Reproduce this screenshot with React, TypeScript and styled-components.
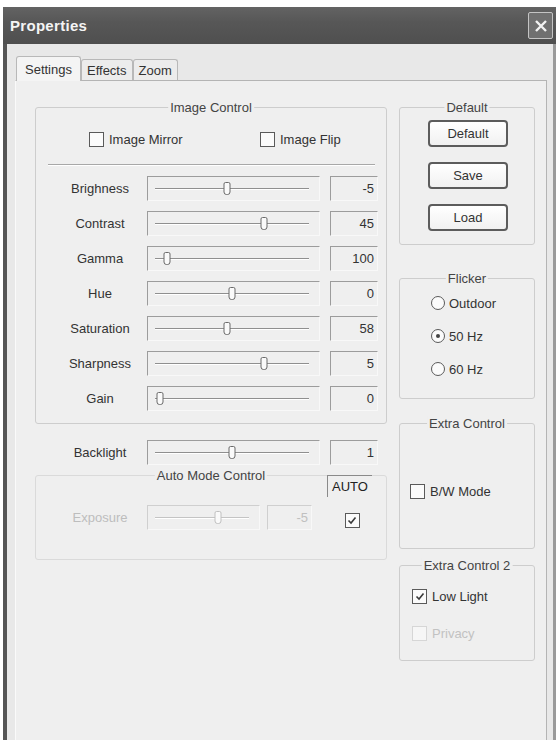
import React from 'react';
import styled, { createGlobalStyle } from 'styled-components';

const GlobalStyle = createGlobalStyle`
  html, body {
    margin: 0;
    background: #ffffff;
  }
  body {
    font-family: "Liberation Sans", Arial, sans-serif;
    font-size: 13px;
    color: #3a3a3a;
  }
`;

const Window = styled.div`
  margin: 7px 0 0 3px;
  width: 553px;
  height: 733px;
  overflow: hidden;
  display: flex;
  flex-direction: column;
`;

const TitleBar = styled.div`
  height: 37px;
  flex: none;
  display: flex;
  align-items: center;
  justify-content: space-between;
  padding: 0 3px 0 7px;
  background: linear-gradient(#636363, #575757 40%, #4f4f4f);
`;

const Title = styled.span`
  color: #f4f4f4;
  font-weight: bold;
  font-size: 15px;
  letter-spacing: 0.3px;
`;

const CloseButton = styled.div`
  width: 23px;
  height: 25px;
  border: 1px solid #c4c4c4;
  border-radius: 2px;
  background: #707070;
  display: flex;
  align-items: center;
  justify-content: center;
`;

const Frame = styled.div`
  flex: 1;
  display: flex;
  flex-direction: column;
  background: #e8e8e8;
  border-left: 4px solid #555555;
  border-right: 3px solid #9a9a9a;
  padding: 11px 6px 0 8px;
`;

const TabStrip = styled.div`
  display: flex;
  align-items: flex-end;
  height: 25px;
  padding-left: 1px;
`;

const Tab = styled.div<{ $active?: boolean }>`
  height: ${(p) => (p.$active ? 25 : 21)}px;
  box-sizing: border-box;
  padding: 0 ${(p) => (p.$active ? 8 : 5)}px;
  display: flex;
  align-items: center;
  border: 1px solid #b8b8b8;
  border-bottom: none;
  border-radius: 3px 3px 0 0;
  background: ${(p) => (p.$active ? '#f4f4f4' : '#ececec')};
  margin-bottom: ${(p) => (p.$active ? -1 : 0)}px;
  position: relative;
  color: #333;
`;

const Panel = styled.div`
  flex: 1;
  background: #efefef;
  border: 1px solid #b4b4b4;
  border-left-color: #fafafa;
  border-bottom: none;
  padding: 26px 11px 0 19px;
  display: grid;
  grid-template-columns: 352px 136px;
  column-gap: 12px;
  align-items: start;
`;

const Column = styled.div`
  display: flex;
  flex-direction: column;
`;

const Group = styled.div<{ $h: number; $mt?: number; $dim?: boolean }>`
  position: relative;
  box-sizing: border-box;
  height: ${(p) => p.$h}px;
  margin-top: ${(p) => p.$mt ?? 0}px;
  border: 1px solid ${(p) => (p.$dim ? '#dadada' : '#cdcdcd')};
  border-radius: 3px;
  display: flex;
  flex-direction: column;
`;

const GroupTitle = styled.span`
  position: absolute;
  top: -8px;
  left: 50%;
  transform: translateX(-50%);
  padding: 0 2px;
  background: #efefef;
  line-height: 15px;
  white-space: nowrap;
  color: #444;
`;

const CheckRow = styled.div`
  display: flex;
  margin-top: 23px;
  padding-left: 53px;
  height: 16px;
  align-items: center;
`;

const CheckItem = styled.label<{ $w?: number; $disabled?: boolean }>`
  display: flex;
  align-items: center;
  gap: 5px;
  width: ${(p) => (p.$w ? `${p.$w}px` : 'auto')};
  color: ${(p) => (p.$disabled ? '#c2c2c2' : '#333')};
  white-space: nowrap;
`;

const Box = styled.span<{ $disabled?: boolean }>`
  width: 13px;
  height: 13px;
  flex: none;
  border: 1px solid ${(p) => (p.$disabled ? '#d6d6d6' : '#5a5a5a')};
  background: ${(p) => (p.$disabled ? '#f6f6f6' : '#fbfbfb')};
  display: flex;
  align-items: center;
  justify-content: center;
`;

const Separator = styled.div`
  margin: 17px 11px 0 12px;
  height: 0;
  border-top: 1px solid #a8a8a8;
  border-bottom: 1px solid #ffffff;
`;

const SliderList = styled.div`
  margin-top: 5px;
  display: flex;
  flex-direction: column;
`;

const Row = styled.div<{ $mt?: number; $pl?: number }>`
  display: flex;
  align-items: center;
  height: 35px;
  margin-top: ${(p) => p.$mt ?? 0}px;
  padding-left: ${(p) => p.$pl ?? 24}px;
`;

const Label = styled.span<{ $disabled?: boolean }>`
  width: 80px;
  margin-right: 7px;
  text-align: center;
  color: ${(p) => (p.$disabled ? '#bdbdbd' : '#333')};
  white-space: nowrap;
`;

const Sunken = styled.div<{ $w: number; $disabled?: boolean }>`
  box-sizing: border-box;
  width: ${(p) => p.$w}px;
  height: 25px;
  flex: none;
  border: 1px solid #f8f8f8;
  border-top-color: ${(p) => (p.$disabled ? '#cfcfcf' : '#9c9c9c')};
  border-left-color: ${(p) => (p.$disabled ? '#cfcfcf' : '#9c9c9c')};
  background: #efefef;
`;

const SliderBox = styled(Sunken)`
  display: flex;
  align-items: center;
`;

const Track = styled.div<{ $disabled?: boolean }>`
  position: relative;
  flex: 1;
  margin: 0 10px 0 7px;
  height: 0;
  border-top: 1px solid ${(p) => (p.$disabled ? '#c4c4c4' : '#8f8f8f')};
  border-bottom: 1px solid #ffffff;
`;

const Thumb = styled.span<{ $disabled?: boolean }>`
  position: absolute;
  top: -7px;
  width: 7px;
  height: 13px;
  transform: translateX(-50%);
  box-sizing: border-box;
  border: 1px solid ${(p) => (p.$disabled ? '#c0c0c0' : '#6a6a6a')};
  border-radius: 2px 2px 3px 3px;
  background: #fafafa;
`;

const ValueBox = styled(Sunken)`
  margin-left: ${(p) => (p.$disabled ? 7 : 10)}px;
  display: flex;
  align-items: center;
  justify-content: flex-end;
  padding-right: 3px;
  color: ${(p) => (p.$disabled ? '#c0c0c0' : '#333')};
`;

const AutoLayout = styled.div`
  display: flex;
  align-items: flex-start;
`;

const ExposureRow = styled(Row)`
  margin-top: 24px;
`;

const AutoColumn = styled.div`
  margin-left: 15px;
  margin-top: -1px;
  width: 45px;
  display: flex;
  flex-direction: column;
  align-items: center;
`;

const AutoTag = styled.div`
  box-sizing: border-box;
  width: 45px;
  height: 22px;
  border-top: 1px solid #8a8a8a;
  border-left: 1px solid #8a8a8a;
  display: flex;
  align-items: center;
  justify-content: center;
  color: #222;
  font-size: 13px;
`;

const AutoCheck = styled.div`
  margin-top: 16px;
  margin-left: 5px;
`;

const ButtonStack = styled.div`
  display: flex;
  flex-direction: column;
  align-items: center;
  gap: 15px;
  margin-top: 12px;
  padding-left: 2px;
`;

const Button = styled.button`
  width: 80px;
  height: 27px;
  box-sizing: border-box;
  border: 2px solid #5c5c5c;
  border-radius: 4px;
  background: linear-gradient(#ffffff, #f1f1f1);
  font-family: inherit;
  font-size: 13px;
  color: #333;
  padding: 0;
`;

const RadioList = styled.div`
  display: flex;
  flex-direction: column;
  gap: 17px;
  margin-top: 16px;
  padding-left: 31px;
`;

const RadioItem = styled.label`
  display: flex;
  align-items: center;
  gap: 4px;
  height: 16px;
  color: #333;
  white-space: nowrap;
`;

const Circle = styled.span`
  width: 12px;
  height: 12px;
  border: 1px solid #5a5a5a;
  border-radius: 50%;
  background: #fbfbfb;
  display: flex;
  align-items: center;
  justify-content: center;
`;

const Dot = styled.span`
  width: 4px;
  height: 4px;
  border-radius: 50%;
  background: #444;
`;

const GroupBody = styled.div<{ $mt: number; $pl: number; $gap?: number }>`
  margin-top: ${(p) => p.$mt}px;
  padding-left: ${(p) => p.$pl}px;
  display: flex;
  flex-direction: column;
  gap: ${(p) => p.$gap ?? 0}px;
`;

const Tick = () => (
  <svg width="10" height="9" viewBox="0 0 10 9">
    <path d="M1.5 4.5 L4 7 L8.5 1.5" fill="none" stroke="#3a3a3a" strokeWidth="1.6" />
  </svg>
);

const Checkbox: React.FC<{ label?: string; checked?: boolean; disabled?: boolean; w?: number }> = ({
  label,
  checked,
  disabled,
  w,
}) => (
  <CheckItem $w={w} $disabled={disabled}>
    <Box $disabled={disabled}>{checked && <Tick />}</Box>
    {label}
  </CheckItem>
);

const Radio: React.FC<{ label: string; selected?: boolean }> = ({ label, selected }) => (
  <RadioItem>
    <Circle>{selected && <Dot />}</Circle>
    {label}
  </RadioItem>
);

const Slider: React.FC<{ w: number; pos: number; disabled?: boolean }> = ({ w, pos, disabled }) => (
  <SliderBox $w={w} $disabled={disabled}>
    <Track $disabled={disabled}>
      <Thumb $disabled={disabled} style={{ left: `${pos * 100}%` }} />
    </Track>
  </SliderBox>
);

const sliders = [
  { label: 'Brighness', pos: 0.47, value: '-5' },
  { label: 'Contrast', pos: 0.71, value: '45' },
  { label: 'Gamma', pos: 0.08, value: '100' },
  { label: 'Hue', pos: 0.5, value: '0' },
  { label: 'Saturation', pos: 0.47, value: '58' },
  { label: 'Sharpness', pos: 0.71, value: '5' },
  { label: 'Gain', pos: 0.03, value: '0' },
];

const App: React.FC = () => (
  <>
    <GlobalStyle />
    <Window>
      <TitleBar>
        <Title>Properties</Title>
        <CloseButton>
          <svg width="14" height="14" viewBox="0 0 14 14">
            <path d="M2 2 L12 12 M12 2 L2 12" stroke="#f2f2f2" strokeWidth="2.4" />
          </svg>
        </CloseButton>
      </TitleBar>
      <Frame>
        <TabStrip>
          <Tab $active>Settings</Tab>
          <Tab>Effects</Tab>
          <Tab>Zoom</Tab>
        </TabStrip>
        <Panel>
          <Column>
            <Group $h={317}>
              <GroupTitle>Image Control</GroupTitle>
              <CheckRow>
                <Checkbox label="Image Mirror" w={171} />
                <Checkbox label="Image Flip" />
              </CheckRow>
              <Separator />
              <SliderList>
                {sliders.map((s) => (
                  <Row key={s.label}>
                    <Label>{s.label}</Label>
                    <Slider w={173} pos={s.pos} />
                    <ValueBox $w={48}>{s.value}</ValueBox>
                  </Row>
                ))}
              </SliderList>
            </Group>
            <Row $mt={11} $pl={25}>
              <Label>Backlight</Label>
              <Slider w={173} pos={0.5} />
              <ValueBox $w={48}>1</ValueBox>
            </Row>
            <Group $h={85} $mt={5} $dim>
              <GroupTitle>Auto Mode Control</GroupTitle>
              <AutoLayout>
                <ExposureRow>
                  <Label $disabled>Exposure</Label>
                  <Slider w={113} pos={0.67} disabled />
                  <ValueBox $w={45} $disabled>
                    -5
                  </ValueBox>
                </ExposureRow>
                <AutoColumn>
                  <AutoTag>AUTO</AutoTag>
                  <AutoCheck>
                    <Checkbox checked />
                  </AutoCheck>
                </AutoColumn>
              </AutoLayout>
            </Group>
          </Column>
          <Column>
            <Group $h={138}>
              <GroupTitle>Default</GroupTitle>
              <ButtonStack>
                <Button>Default</Button>
                <Button>Save</Button>
                <Button>Load</Button>
              </ButtonStack>
            </Group>
            <Group $h={121} $mt={33}>
              <GroupTitle>Flicker</GroupTitle>
              <RadioList>
                <Radio label="Outdoor" />
                <Radio label="50 Hz" selected />
                <Radio label="60 Hz" />
              </RadioList>
            </Group>
            <Group $h={126} $mt={24}>
              <GroupTitle>Extra Control</GroupTitle>
              <GroupBody $mt={60} $pl={10}>
                <Checkbox label="B/W Mode" />
              </GroupBody>
            </Group>
            <Group $h={96} $mt={16}>
              <GroupTitle>Extra Control 2</GroupTitle>
              <GroupBody $mt={23} $pl={12} $gap={22}>
                <Checkbox label="Low Light" checked />
                <Checkbox label="Privacy" disabled />
              </GroupBody>
            </Group>
          </Column>
        </Panel>
      </Frame>
    </Window>
  </>
);

export default App;
